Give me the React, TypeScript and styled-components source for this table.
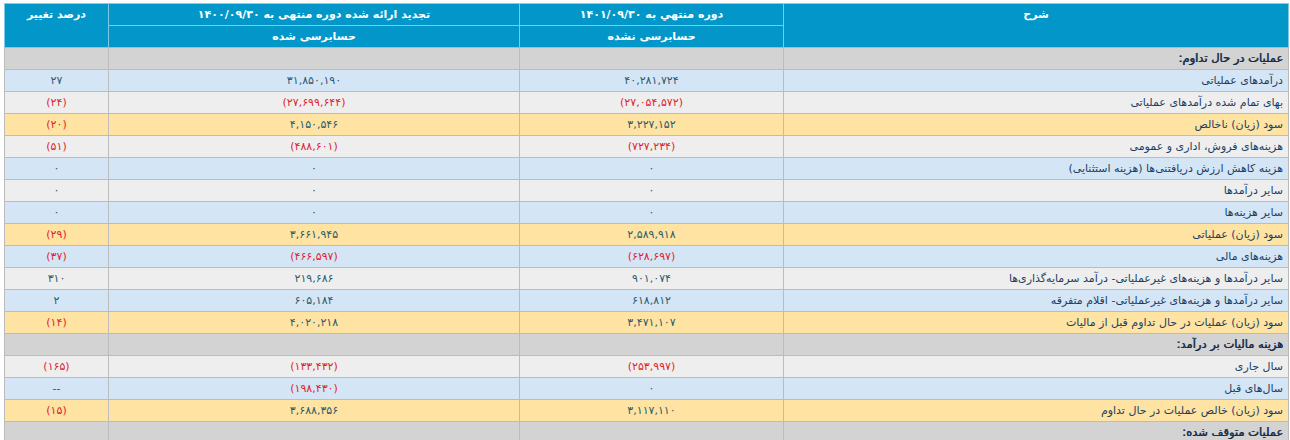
import React from "react";
import styled, { createGlobalStyle, css } from "styled-components";

const GlobalStyle = createGlobalStyle`
  html, body { margin: 0; padding: 0; background: #ffffff; }
  body { font-family: "DejaVu Sans", "Noto Sans", sans-serif; }
`;

const Wrap = styled.div`
  padding: 3px 2px 0 4px;
`;

const Table = styled.table`
  width: 1284px;
  table-layout: fixed;
  border-collapse: collapse;
  direction: rtl;
  font-family: "DejaVu Sans", "Noto Sans", sans-serif;
  font-size: 11px;
  border: 1px solid #bcbcbc;
`;

const HeadCell = styled.th<{ $top?: boolean }>`
  background: #0397c9;
  color: #ffffff;
  font-weight: bold;
  font-size: 11px;
  height: 21px;
  padding: 0 4px;
  text-align: center;
  vertical-align: ${(p) => (p.$top ? "top" : "middle")};
  line-height: 21px;
  border: 1px solid #7fc9e6;
  border-top-color: #bcbcbc;
`;

type Tone = "section" | "blue" | "gray" | "yellow";

const toneBg: Record<Tone, string> = {
  section: "#d3d3d3",
  blue: "#d4e5f5",
  gray: "#eeeeee",
  yellow: "#fee3a2",
};

const Row = styled.tr<{ $tone: Tone }>`
  background: ${(p) => toneBg[p.$tone]};
`;

const LabelCell = styled.td<{ $section?: boolean }>`
  height: 21px;
  line-height: 21px;
  padding: 0 5px;
  text-align: right;
  white-space: nowrap;
  border: 1px solid #bcbcbc;
  color: #1d3d63;
  ${(p) =>
    p.$section &&
    css`
      font-size: 11.5px;
      color: #16304d;
      text-shadow: 0.6px 0 0 #16304d;
    `}
`;

const NumCell = styled.td<{ $neg?: boolean }>`
  height: 21px;
  line-height: 21px;
  padding: 0 4px;
  text-align: center;
  direction: ltr;
  white-space: nowrap;
  border: 1px solid #bcbcbc;
  color: ${(p) => (p.$neg ? "#e11f2b" : "#2c5a6e")};
`;

type Line = {
  tone: Tone;
  label: string;
  a?: string;
  b?: string;
  c?: string;
};

const rows: Line[] = [
  { tone: "section", label: "عملیات در حال تداوم:" },
  { tone: "blue", label: "درآمدهای عملیاتی", a: "۴۰,۲۸۱,۷۲۴", b: "۳۱,۸۵۰,۱۹۰", c: "۲۷" },
  { tone: "gray", label: "بهای تمام شده درآمدهای عملیاتی", a: "(۲۷,۰۵۴,۵۷۲)", b: "(۲۷,۶۹۹,۶۴۴)", c: "(۲۴)" },
  { tone: "yellow", label: "سود (زیان) ناخالص", a: "۳,۲۲۷,۱۵۲", b: "۴,۱۵۰,۵۴۶", c: "(۲۰)" },
  { tone: "gray", label: "هزینه‌های فروش، اداری و عمومی", a: "(۷۲۷,۲۳۴)", b: "(۴۸۸,۶۰۱)", c: "(۵۱)" },
  { tone: "blue", label: "هزینه کاهش ارزش دریافتنی‌ها (هزینه استثنایی)", a: "۰", b: "۰", c: "۰" },
  { tone: "gray", label: "سایر درآمدها", a: "۰", b: "۰", c: "۰" },
  { tone: "blue", label: "سایر هزینه‌ها", a: "۰", b: "۰", c: "۰" },
  { tone: "yellow", label: "سود (زیان) عملیاتی", a: "۲,۵۸۹,۹۱۸", b: "۳,۶۶۱,۹۴۵", c: "(۲۹)" },
  { tone: "blue", label: "هزینه‌های مالی", a: "(۶۲۸,۶۹۷)", b: "(۴۶۶,۵۹۷)", c: "(۳۷)" },
  { tone: "gray", label: "سایر درآمدها و هزینه‌های غیرعملیاتی- درآمد سرمایه‌گذاری‌ها", a: "۹۰۱,۰۷۴", b: "۲۱۹,۶۸۶", c: "۳۱۰" },
  { tone: "blue", label: "سایر درآمدها و هزینه‌های غیرعملیاتی- اقلام متفرقه", a: "۶۱۸,۸۱۲", b: "۶۰۵,۱۸۴", c: "۲" },
  { tone: "yellow", label: "سود (زیان) عملیات در حال تداوم قبل از مالیات", a: "۳,۴۷۱,۱۰۷", b: "۴,۰۲۰,۲۱۸", c: "(۱۴)" },
  { tone: "section", label: "هزینه مالیات بر درآمد:" },
  { tone: "gray", label: "سال جاری", a: "(۲۵۳,۹۹۷)", b: "(۱۳۳,۴۳۲)", c: "(۱۶۵)" },
  { tone: "blue", label: "سال‌های قبل", a: "۰", b: "(۱۹۸,۴۳۰)", c: "--" },
  { tone: "yellow", label: "سود (زیان) خالص عملیات در حال تداوم", a: "۳,۱۱۷,۱۱۰", b: "۳,۶۸۸,۳۵۶", c: "(۱۵)" },
  { tone: "section", label: "عملیات متوقف شده:" },
];

const isNeg = (v?: string) => !!v && v.startsWith("(");

export default function App() {
  return (
    <>
      <GlobalStyle />
      <Wrap>
        <Table>
          <colgroup>
            <col style={{ width: 505 }} />
            <col style={{ width: 264 }} />
            <col style={{ width: 411 }} />
            <col style={{ width: 104 }} />
          </colgroup>
          <thead>
            <tr>
              <HeadCell rowSpan={2} $top>شرح</HeadCell>
              <HeadCell>دوره منتهي به ۱۴۰۱/۰۹/۳۰</HeadCell>
              <HeadCell>تجدید ارائه شده دوره منتهی به ۱۴۰۰/۰۹/۳۰</HeadCell>
              <HeadCell rowSpan={2} $top>درصد تغییر</HeadCell>
            </tr>
            <tr>
              <HeadCell>حسابرسی نشده</HeadCell>
              <HeadCell>حسابرسی شده</HeadCell>
            </tr>
          </thead>
          <tbody>
            {rows.map((r, i) => (
              <Row key={i} $tone={r.tone}>
                <LabelCell $section={r.tone === "section"}>{r.label}</LabelCell>
                <NumCell $neg={isNeg(r.a)}>{r.a}</NumCell>
                <NumCell $neg={isNeg(r.b)}>{r.b}</NumCell>
                <NumCell $neg={isNeg(r.c)}>{r.c}</NumCell>
              </Row>
            ))}
          </tbody>
        </Table>
      </Wrap>
    </>
  );
}
